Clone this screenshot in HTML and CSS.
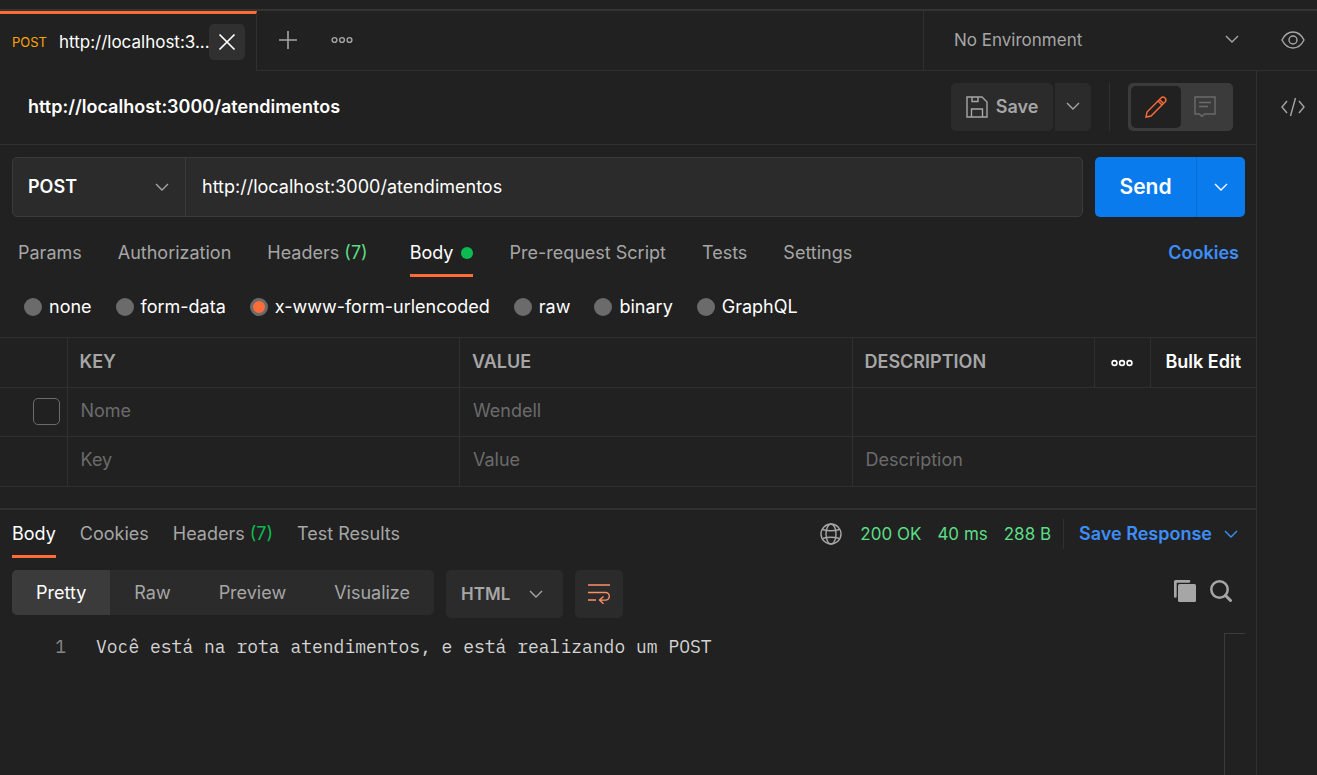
FILE: index.html
```html
<!DOCTYPE html>
<html lang="en">
<head>
<meta charset="utf-8">
<meta name="viewport" content="width=device-width, initial-scale=1">
<title>http://localhost:3000/atendimentos</title>
<link rel="stylesheet" href="styles.css">
</head>
<body>
<div class="app">
  <header class="tabbar">
    <div class="tab">
      <span class="tab-method">POST</span>
      <span class="tab-name">http://localhost:3...</span>
      <button class="tab-close" aria-label="Close tab"><svg width="18" height="18" viewBox="0 0 18 18"><path d="M1.500 1.500l15 15M16.500 1.500l-15 15" stroke-width="1.7"/></svg></button>
    </div>
    <div class="tab-tools">
      <button class="icon-btn" aria-label="New tab"><svg width="18" height="18" viewBox="0 0 18 18"><path d="M9 0v18M0 9h18" stroke-width="1.6"/></svg></button>
      <button class="icon-btn" aria-label="Tab options"><svg width="22" height="8" viewBox="0 0 22 8"><circle cx="3.500" cy="4" r="2.400"/><circle cx="11" cy="4" r="2.400"/><circle cx="18.500" cy="4" r="2.400"/></svg></button>
    </div>
    <div class="env">
      <select class="env-select" aria-label="Environment"><option>No Environment</option></select>
      <svg class="caret" width="14" height="9" viewBox="0 0 14 9"><path d="M1 1l6 6 6-6"/></svg>
    </div>
    <button class="icon-btn eye" aria-label="Environment quick look"><svg width="24" height="18" viewBox="0 0 24 18"><path d="M1 9C3.500 4 7.500 1 12 1s8.500 3 11 8c-2.500 5-6.500 8-11 8S3.500 14 1 9z"/><circle cx="12" cy="9" r="4"/></svg></button>
  </header>

  <div class="workspace">
    <main class="main">
      <div class="title-row">
        <h1 class="title">http://localhost:3000/atendimentos</h1>
        <div class="save-group">
          <button class="save"><svg width="22" height="22" viewBox="0 0 22 22"><path d="M1 1h15l5 5v15H1zM6 1v4.500h6V1M5.500 21v-8h11v8"/></svg>Save</button>
          <button class="save-more" aria-label="More save options"><svg width="14" height="9" viewBox="0 0 14 9"><path d="M1 1l6 6 6-6"/></svg></button>
        </div>
        <div class="mode-wrap">
          <div class="mode">
            <button class="mode-btn mode-on" aria-label="Build"><svg width="22" height="22" viewBox="0 0 22 22"><path d="M1 21l1-5L16 2a2.800 2.800 0 0 1 4 4L6 20zM13 5l4 4M14.500 3.500l4 4"/></svg></button>
            <button class="mode-btn" aria-label="Comments"><svg width="22" height="22" viewBox="0 0 22 22"><path d="M1 1h20v17H10.500L8 20.500 5.500 18H1zM5 6.500h12M5 10.500h9"/></svg></button>
          </div>
        </div>
      </div>

      <form class="url-row" onsubmit="return false">
        <div class="url-box">
          <div class="method">
            <select class="method-select" aria-label="Method"><option>POST</option></select>
            <svg class="caret" width="14" height="9" viewBox="0 0 14 9"><path d="M1 1l6 6 6-6"/></svg>
          </div>
          <input class="url" type="text" aria-label="Request URL" value="http://localhost:3000/atendimentos">
        </div>
        <div class="send-group">
          <button class="send" type="submit">Send</button>
          <button class="send-more" type="button" aria-label="More send options"><svg width="14" height="9" viewBox="0 0 14 9"><path d="M1 1l6 6 6-6"/></svg></button>
        </div>
      </form>

      <nav class="req-tabs">
        <button class="link-tab">Params</button>
        <button class="link-tab">Authorization</button>
        <button class="link-tab">Headers <span class="count">(7)</span></button>
        <button class="link-tab link-on">Body<span class="dot"></span></button>
        <button class="link-tab">Pre-request Script</button>
        <button class="link-tab">Tests</button>
        <button class="link-tab">Settings</button>
        <a class="cookies" href="#cookies">Cookies</a>
      </nav>

      <div class="body-types">
        <label class="radio"><input type="radio" name="body">none</label>
        <label class="radio"><input type="radio" name="body">form-data</label>
        <label class="radio"><input type="radio" name="body" checked>x-www-form-urlencoded</label>
        <label class="radio"><input type="radio" name="body">raw</label>
        <label class="radio"><input type="radio" name="body">binary</label>
        <label class="radio"><input type="radio" name="body">GraphQL</label>
      </div>

      <table class="params">
        <colgroup><col class="c-check"><col><col><col class="c-desc"><col class="c-more"><col class="c-bulk"></colgroup>
        <thead>
          <tr>
            <th></th><th>KEY</th><th>VALUE</th><th>DESCRIPTION</th>
            <th class="center"><button class="bare" aria-label="Columns"><svg width="22" height="8" viewBox="0 0 22 8"><circle cx="3.500" cy="4" r="2.400"/><circle cx="11" cy="4" r="2.400"/><circle cx="18.500" cy="4" r="2.400"/></svg></button></th>
            <th class="center"><button class="bare">Bulk Edit</button></th>
          </tr>
        </thead>
        <tbody>
          <tr><td class="check-cell"><input class="check" type="checkbox" aria-label="Enable Nome"></td><td>Nome</td><td>Wendell</td><td colspan="3"></td></tr>
          <tr><td></td><td>Key</td><td>Value</td><td colspan="3">Description</td></tr>
        </tbody>
      </table>

      <section class="response">
        <div class="res-head">
          <nav class="res-tabs">
            <button class="link-tab link-on">Body</button>
            <button class="link-tab">Cookies</button>
            <button class="link-tab">Headers <span class="count-dark">(7)</span></button>
            <button class="link-tab">Test Results</button>
          </nav>
          <div class="status">
            <svg width="22" height="22" viewBox="0 0 22 22"><circle cx="11" cy="11" r="10"/><ellipse cx="11" cy="11" rx="5" ry="10"/><path d="M2.500 6.500Q11 9 19.500 6.500M2.500 15.500Q11 13 19.500 15.500"/></svg>
            <span>200 OK</span><span>40 ms</span><span>288 B</span>
          </div>
          <button class="save-res">Save Response<svg width="14" height="9" viewBox="0 0 14 9"><path d="M1 1l6 6 6-6"/></svg></button>
        </div>

        <div class="view-row">
          <div class="views">
            <button class="view view-on">Pretty</button>
            <button class="view">Raw</button>
            <button class="view">Preview</button>
            <button class="view">Visualize</button>
          </div>
          <div class="lang">
            <select class="lang-select" aria-label="Language"><option>HTML</option></select>
            <svg class="caret" width="14" height="9" viewBox="0 0 14 9"><path d="M1 1l6 6 6-6"/></svg>
          </div>
          <button class="wrap" aria-label="Wrap lines"><svg width="22" height="22" viewBox="0 0 22 22"><path d="M0 2h22M0 9.500h17.500a3.800 3.800 0 0 1 0 7.600H12M0 17h8M15.500 13.500l-4 3.600 4 3.600"/></svg></button>
          <div class="res-tools">
            <button class="icon-btn" aria-label="Copy"><svg width="22" height="22" viewBox="0 0 22 22"><path class="solid" d="M0 1.500Q0 0 1.500 0H15a1.200 1.200 0 0 1 0 2.700H2.700V16.500a1.300 1.300 0 0 1-2.700 0z"/><rect class="solid" x="4" y="4" width="18" height="18" rx="1.500"/></svg></button>
            <button class="icon-btn" aria-label="Search"><svg width="22" height="22" viewBox="0 0 22 22"><circle cx="9.500" cy="9.500" r="8.200" stroke-width="2.500"/><path d="M15.500 15.500l5 5" stroke-width="3" stroke-linecap="round"/></svg></button>
          </div>
        </div>

        <div class="editor">
          <span class="line-no">1</span>
          <code class="code">Você está na rota atendimentos, e está realizando um POST</code>
          <div class="ruler"></div>
        </div>
      </section>
    </main>
    <aside class="rail">
      <button class="icon-btn" aria-label="Code"><svg width="24" height="20" viewBox="0 0 24 20"><path d="M6 4L1 10l5 6M18 4l5 6-5 6M14.500 1l-5 18"/></svg></button>
    </aside>
  </div>
</div>
</body>
</html>
```

FILE: styles.css
```css
* { box-sizing: border-box; }

body {
  margin: 0;
  background: #212121;
  color: #fff;
  font: 18px/24px Inter, "Liberation Sans", sans-serif;
}

button, input, select {
  margin: 0;
  padding: 0;
  border: 0;
  background: none;
  color: inherit;
  font: inherit;
  appearance: none;
  outline: 0;
}

button { cursor: pointer; }

svg {
  display: block;
  flex: none;
  fill: none;
  stroke: currentColor;
  stroke-width: 1.4;
}

.solid { fill: currentColor; stroke: none; }

.app {
  display: flex;
  flex-direction: column;
  min-height: 100vh;
  padding-top: 9px;
}

.icon-btn {
  display: flex;
  align-items: center;
  justify-content: center;
  color: #a6a6a6;
}

/* Top bar */
.tabbar {
  display: flex;
  height: 62px;
  border-top: 2px solid #343434;
}

.tab {
  display: flex;
  align-items: center;
  width: 257px;
  padding: 0 11px 2px 12px;
  border-top: 3px solid #ff6c37;
  border-right: 1px solid #303030;
}

.tab-method { margin-right: 12px; color: #ffa400; font-size: 13px; }
.tab-name { flex: 1; min-width: 0; white-space: nowrap; font-size: 17px; }

.tab-close {
  display: flex;
  flex: none;
  align-items: center;
  justify-content: center;
  width: 36px;
  height: 36px;
  border-radius: 5px;
  background: #303030;
}

.tab-tools {
  display: flex;
  flex: 1;
  gap: 34px;
  padding: 0 0 2px 22px;
  border-bottom: 1px solid #303030;
}

.env {
  display: flex;
  align-items: center;
  width: 334px;
  padding: 0 0 2px 30px;
  border-left: 1px solid #303030;
  border-bottom: 1px solid #303030;
  color: #a6a6a6;
}

.env-select { flex: 1; font-size: 17px; }
.env .caret { margin-right: 18px; }

.eye { width: 60px; padding: 0 0 2px 12px; border-bottom: 1px solid #303030; }

.workspace { display: flex; flex: 1; }
.main { display: flex; flex: 1; flex-direction: column; min-width: 0; }

.rail {
  width: 61px;
  padding: 26px 0 0 24px;
  border-left: 1px solid #303030;
}

/* Request title */
.title-row {
  display: flex;
  align-items: center;
  height: 74px;
  padding: 0 23px 2px 28px;
  border-bottom: 1px solid #303030;
}

.title { flex: 1; margin: 0; font-size: 18px; font-weight: 600; }
.save-group { display: flex; gap: 2px; color: #a6a6a6; }

.save, .save-more {
  display: flex;
  align-items: center;
  justify-content: center;
  gap: 8px;
  height: 48px;
  background: #2b2b2b;
}

.save { width: 102px; border-radius: 5px; font-weight: 600; }
.save-more { width: 36px; border-radius: 0 5px 5px 0; }

.mode-wrap {
  height: 48px;
  margin-left: 18px;
  padding-left: 18px;
  border-left: 1px solid #303030;
}

.mode {
  display: flex;
  width: 105px;
  height: 48px;
  padding: 3px;
  border-radius: 5px;
  background: #3b3b3b;
}

.mode-btn {
  display: flex;
  flex: 1;
  align-items: center;
  justify-content: center;
  border-radius: 5px;
  color: #6b6b6b;
}

.mode-on { background: #212121; color: #ff6c37; }

/* URL bar */
.url-row { display: flex; gap: 12px; padding: 12px 11px 0 12px; }

.url-box {
  display: flex;
  flex: 1;
  height: 60px;
  border: 1px solid #3b3b3b;
  border-radius: 5px;
  background: #2b2b2b;
}

.method {
  display: flex;
  align-items: center;
  width: 173px;
  padding: 0 16px 0 15px;
  border-right: 1px solid #3b3b3b;
}

.method-select { flex: 1; font-weight: 600; }
.method .caret { color: #a6a6a6; }
.url { flex: 1; min-width: 0; padding: 0 16px; }

.send-group { display: flex; overflow: hidden; border-radius: 5px; background: #097bed; }
.send { width: 101px; font-size: 21px; font-weight: 600; }

.send-more {
  display: flex;
  align-items: center;
  justify-content: center;
  width: 49px;
  border-left: 1px solid #0a6dd0;
}

/* Request sections */
.req-tabs { display: flex; gap: 36px; height: 60px; padding: 12px 17px 0 18px; }

.link-tab {
  height: 48px;
  padding-top: 3px;
  border-bottom: 3px solid transparent;
  color: #a6a6a6;
  white-space: nowrap;
}

.link-on { border-color: #ff6c37; color: #fff; }
.count { margin-right: 6px; color: #5bdd86; }
.count-dark { color: #0cbb52; }

.dot {
  display: inline-block;
  width: 12px;
  height: 12px;
  margin-left: 8px;
  border-radius: 50%;
  background: #0cbb52;
  vertical-align: 0;
}

.cookies {
  margin-left: auto;
  line-height: 48px;
  color: #3d8ef8;
  font-weight: 600;
  text-decoration: none;
}

.body-types {
  display: flex;
  align-items: center;
  gap: 24px;
  height: 60px;
  padding-left: 24px;
}

.radio { display: flex; align-items: center; gap: 7px; }

.radio input { width: 18px; height: 18px; border-radius: 50%; background: #6b6b6b; }
.radio input:checked { border: 3px solid #6b6b6b; background: #ff6c37; }

/* Parameter table */
.params {
  width: 100%;
  border-collapse: collapse;
  table-layout: fixed;
  text-align: left;
}

.params tr { height: 50px; border: solid #303030; border-width: 1px 0; }
.params tbody tr:first-child { height: 49px; }
.params th, .params td { padding: 0 12px; border-left: 1px solid #303030; }
.params th { padding-bottom: 1px; color: #a6a6a6; font-weight: 600; }
.params td { padding: 0 13px 3px; color: #6b6b6b; }
.params th:first-child, .params td:first-child { border-left: 0; }
.params .center { padding: 0 0 2px; text-align: center; }
.params .check-cell { padding: 0 7px 2px 0; }
.c-check { width: 67px; }
.c-desc { width: 242px; }
.c-more { width: 56px; }
.c-bulk { width: 106px; }

.check {
  display: block;
  width: 27px;
  height: 27px;
  margin-left: auto;
  border: 1px solid #6b6b6b;
  border-radius: 5px;
}

.bare { color: #fff; vertical-align: middle; }
.bare svg { stroke-width: 1.6; }

/* Response */
.response {
  display: flex;
  flex: 1;
  flex-direction: column;
  margin-top: 21px;
  border-top: 2px solid #303030;
}

.res-head { display: flex; align-items: center; height: 48px; padding: 0 18px 0 12px; }
.res-tabs { display: flex; flex: 1; gap: 24px; }

.status {
  display: flex;
  align-items: center;
  gap: 16px;
  height: 30px;
  padding-right: 12px;
  border-right: 1px solid #303030;
  color: #5bdd86;
  font-size: 17px;
}

.status svg { margin-right: 2px; color: #a6a6a6; }

.save-res {
  display: flex;
  align-items: center;
  gap: 12px;
  padding-left: 15px;
  color: #3d8ef8;
  font-weight: 600;
}

.view-row { display: flex; align-items: flex-start; gap: 12px; padding: 12px 24px 0 12px; }

.views { display: flex; overflow: hidden; border-radius: 5px; background: #2b2b2b; }
.view { height: 45px; padding: 0 24px; color: #a6a6a6; }
.view-on { background: #3b3b3b; color: #fff; }

.lang {
  display: flex;
  align-items: center;
  width: 117px;
  height: 48px;
  padding: 0 20px 0 15px;
  border-radius: 5px;
  background: #2b2b2b;
  color: #a6a6a6;
}

.lang-select { flex: 1; min-width: 0; font-size: 17px; font-weight: 600; }

.wrap {
  display: flex;
  align-items: center;
  justify-content: center;
  width: 48px;
  height: 48px;
  border-radius: 5px;
  background: #2b2b2b;
  color: #ff8e64;
}

.res-tools { display: flex; gap: 14px; margin-left: auto; padding-top: 10px; }

.editor {
  display: flex;
  flex: 1;
  margin-top: 15px;
  padding-right: 11px;
  line-height: 28px;
}

.line-no, .code { font-family: "IBM Plex Mono", "Liberation Mono", monospace; font-size: 18px; }
.line-no { width: 66px; text-align: right; color: #858585; }
.code { flex: 1; margin-left: 30px; color: #d4d4d4; }
.ruler { width: 21px; border: solid #3b3b3b; border-width: 1px 0 0 1px; }
```
